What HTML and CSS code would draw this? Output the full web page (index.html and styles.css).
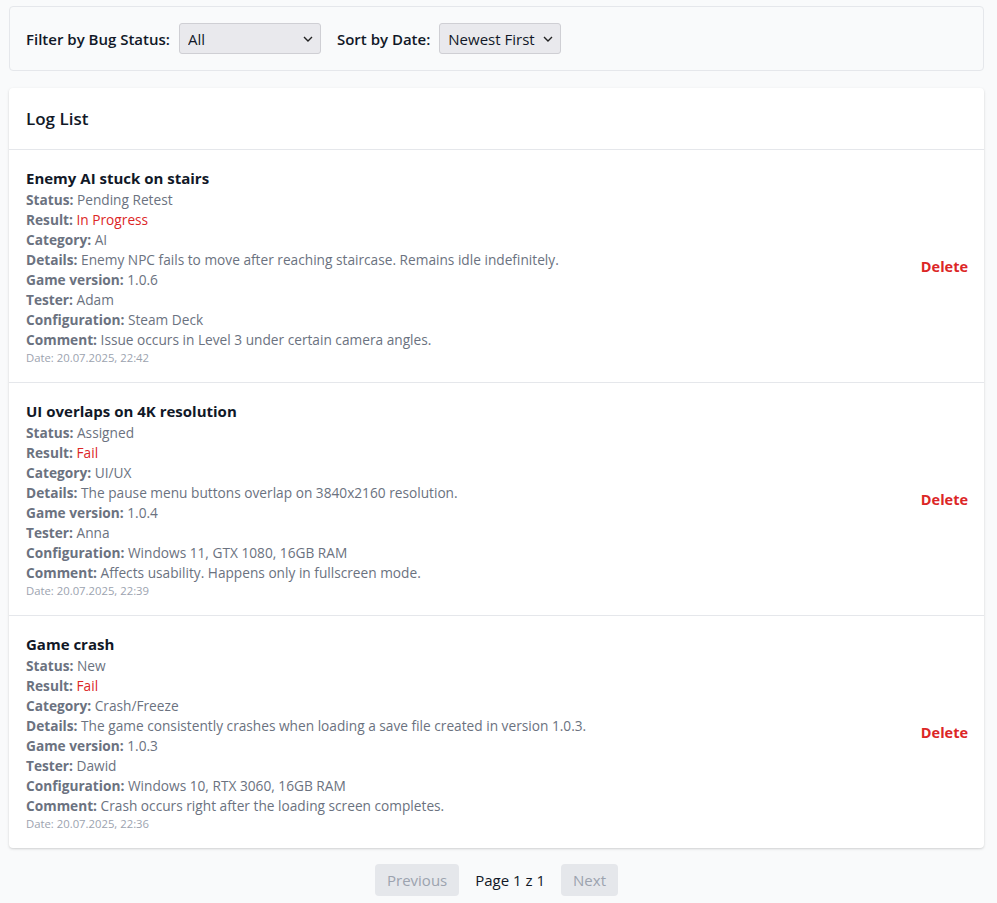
FILE: index.html
```html
<!DOCTYPE html>
<html lang="en">
<head>
<meta charset="utf-8">
<title>Log List</title>
<link rel="stylesheet" href="styles.css">
</head>
<body>
<div class="page">
  <div class="filters">
    <label class="filter-label">Filter by Bug Status:</label>
    <span class="select-wrap select-status">
      <select class="select"><option>All</option></select>
      <svg class="chev" width="10" height="6" viewBox="0 0 10 6"><path d="M1 1l4 4 4-4" fill="none" stroke="#222" stroke-width="1.4"/></svg>
    </span>
    <label class="filter-label">Sort by Date:</label>
    <span class="select-wrap select-sort">
      <select class="select"><option>Newest First</option></select>
      <svg class="chev" width="10" height="6" viewBox="0 0 10 6"><path d="M1 1l4 4 4-4" fill="none" stroke="#222" stroke-width="1.4"/></svg>
    </span>
  </div>

  <div class="card">
    <div class="card-header">Log List</div>

    <div class="item">
      <div class="info">
        <div class="title">Enemy AI stuck on stairs</div>
        <div class="row"><b>Status:</b> Pending Retest</div>
        <div class="row"><b>Result:</b> <span class="red">In Progress</span></div>
        <div class="row"><b>Category:</b> AI</div>
        <div class="row"><b>Details:</b> Enemy NPC fails to move after reaching staircase. Remains idle indefinitely.</div>
        <div class="row"><b>Game version:</b> 1.0.6</div>
        <div class="row"><b>Tester:</b> Adam</div>
        <div class="row"><b>Configuration:</b> Steam Deck</div>
        <div class="row"><b>Comment:</b> Issue occurs in Level 3 under certain camera angles.</div>
        <div class="date">Date: 20.07.2025, 22:42</div>
      </div>
      <button class="delete">Delete</button>
    </div>

    <div class="item">
      <div class="info">
        <div class="title">UI overlaps on 4K resolution</div>
        <div class="row"><b>Status:</b> Assigned</div>
        <div class="row"><b>Result:</b> <span class="red">Fail</span></div>
        <div class="row"><b>Category:</b> UI/UX</div>
        <div class="row"><b>Details:</b> The pause menu buttons overlap on 3840x2160 resolution.</div>
        <div class="row"><b>Game version:</b> 1.0.4</div>
        <div class="row"><b>Tester:</b> Anna</div>
        <div class="row"><b>Configuration:</b> Windows 11, GTX 1080, 16GB RAM</div>
        <div class="row"><b>Comment:</b> Affects usability. Happens only in fullscreen mode.</div>
        <div class="date">Date: 20.07.2025, 22:39</div>
      </div>
      <button class="delete">Delete</button>
    </div>

    <div class="item">
      <div class="info">
        <div class="title">Game crash</div>
        <div class="row"><b>Status:</b> New</div>
        <div class="row"><b>Result:</b> <span class="red">Fail</span></div>
        <div class="row"><b>Category:</b> Crash/Freeze</div>
        <div class="row"><b>Details:</b> The game consistently crashes when loading a save file created in version 1.0.3.</div>
        <div class="row"><b>Game version:</b> 1.0.3</div>
        <div class="row"><b>Tester:</b> Dawid</div>
        <div class="row"><b>Configuration:</b> Windows 10, RTX 3060, 16GB RAM</div>
        <div class="row"><b>Comment:</b> Crash occurs right after the loading screen completes.</div>
        <div class="date">Date: 20.07.2025, 22:36</div>
      </div>
      <button class="delete">Delete</button>
    </div>
  </div>

  <div class="pagination">
    <button class="page-btn" disabled>Previous</button>
    <span class="page-info">Page 1 z 1</span>
    <button class="page-btn" disabled>Next</button>
  </div>
</div>
</body>
</html>
```

FILE: styles.css
```css
* { box-sizing: border-box; }
html, body {
  margin: 0;
  padding: 0;
  background: #f9fafb;
}
body {
  font-family: "Open Sans", "Noto Sans", sans-serif;
  color: #111827;
}
.page {
  width: 975px;
  margin-left: 9px;
  padding-top: 6px;
}
.filters {
  display: flex;
  align-items: center;
  height: 65px;
  padding: 0 16px;
  border: 1px solid #e5e7eb;
  border-radius: 4px;
  background: #f9fafb;
}
.filter-label {
  font-size: 15px;
  font-weight: 600;
  color: #111827;
  margin-right: 9px;
}
.select-wrap {
  position: relative;
  display: inline-block;
  margin-right: 16px;
}
.select {
  appearance: none;
  -webkit-appearance: none;
  height: 31px;
  padding: 0 8px;
  font-family: inherit;
  font-size: 15px;
  color: #111827;
  background: #e9e9ed;
  border: 1px solid #cfcfd4;
  border-radius: 3px;
}
.select-status .select { width: 142px; }
.select-sort .select { width: 122px; }
.chev {
  position: absolute;
  right: 8px;
  top: 13px;
  pointer-events: none;
}
.card {
  margin-top: 17px;
  background: #fff;
  border-radius: 4px;
  box-shadow: 0 1px 3px rgba(0,0,0,0.12), 0 1px 2px rgba(0,0,0,0.06);
}
.card-header {
  height: 62px;
  display: flex;
  align-items: center;
  padding: 0 16px 0 17px;
  font-size: 17px;
  font-weight: 600;
  border-bottom: 1px solid #e5e7eb;
}
.item {
  display: flex;
  align-items: center;
  justify-content: space-between;
  padding: 16px 16px 16px 17px;
  border-bottom: 1px solid #e5e7eb;
}
.item:last-child { border-bottom: none; }
.title {
  font-size: 15px;
  font-weight: 700;
  line-height: 24px;
  color: #111827;
}
.row {
  font-size: 13.7px;
  line-height: 20px;
  color: #6b7280;
}
.row b { font-weight: 700; }
.red { color: #dc2626; }
.date {
  font-size: 11.3px;
  line-height: 16px;
  color: #9ca3af;
}
.delete {
  background: none;
  border: none;
  padding: 0;
  font-family: inherit;
  font-size: 14.5px;
  font-weight: 700;
  color: #dc2626;
  cursor: pointer;
}
.pagination {
  display: flex;
  justify-content: center;
  align-items: center;
  gap: 16px;
  margin-top: 16px;
  padding-bottom: 16px;
}
.page-btn {
  height: 32px;
  padding: 0 12px;
  font-family: inherit;
  font-size: 15px;
  color: #9ca3af;
  background: #e5e7eb;
  border: none;
  border-radius: 4px;
}
.page-info {
  font-size: 15px;
  color: #111827;
}
```
